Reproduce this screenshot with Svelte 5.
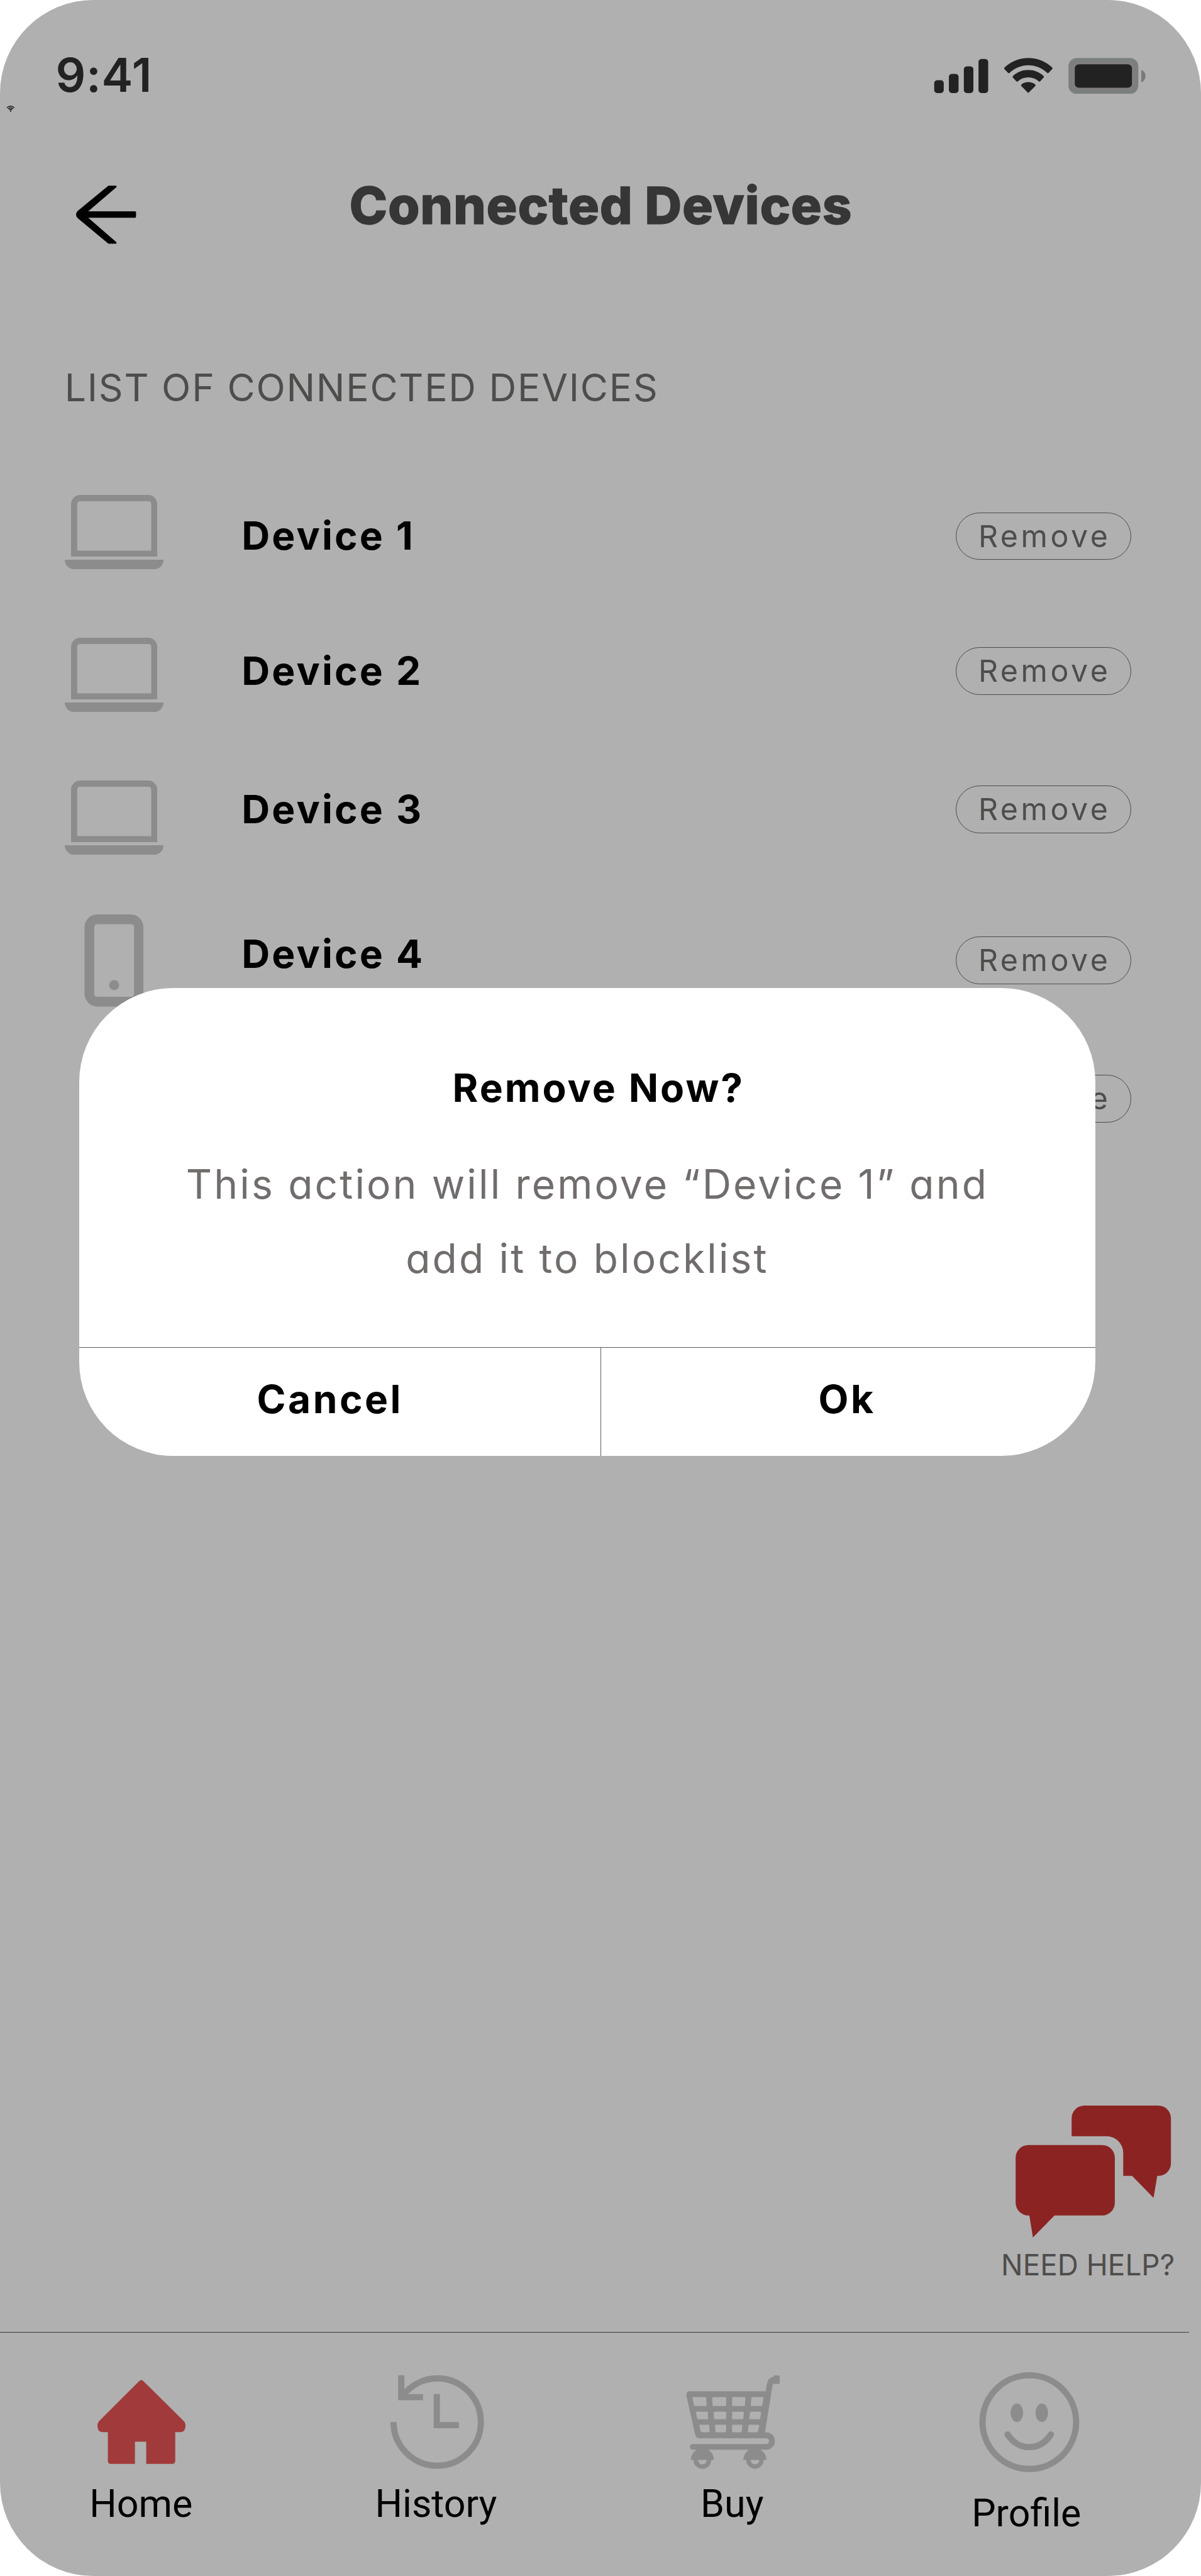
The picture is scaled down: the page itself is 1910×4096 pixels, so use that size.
<script>
  // Vertical offsets are in rem, measured from the top of each row.
  const devices = [
    { name: 'Device 1', icon: 'laptop', height: 3.61, nameTop: 0.545, pillTop: 0.435 },
    { name: 'Device 2', icon: 'laptop', height: 3.61, nameTop: 0.345, pillTop: 0.235 },
    { name: 'Device 3', icon: 'laptop', height: 3.385, nameTop: 0.245, pillTop: 0.135 },
    { name: 'Device 4', icon: 'phone', height: 3.665, nameTop: 0.515, pillTop: 0.57 },
    { name: 'Device 5', icon: 'phone', height: 2.33, nameTop: 0.515, pillTop: 0.4 }
  ];

  // Openings of the cart basket: top-left, top-right, bottom-right, bottom-left x positions per row.
  const basket = [
    { y1: 205, y2: 259, cells: [[84, 190, 194, 98], [234, 342, 342, 238], [386, 488, 484, 386], [532, 625, 617, 528]] },
    { y1: 316, y2: 359, cells: [[111, 202, 205, 122], [246, 342, 342, 249], [386, 476, 472, 386], [521, 607, 601, 517]] },
    { y1: 415, y2: 458, cells: [[137, 212, 216, 148], [256, 342, 342, 260], [386, 465, 461, 386], [509, 592, 584, 506]] }
  ];
  const openings = basket.flatMap(({ y1, y2, cells }) =>
    cells.map(([a, b, c, d]) => `${a + 8},${y1} ${b - 7},${y1} ${c - 8},${y2} ${d + 7},${y2}`)
  );
</script>

<div class="screen">
  <header class="status">
    <span class="time">9:41</span>
    <svg class="indicators" viewBox="60 315 1405 275" preserveAspectRatio="none" fill="#222">
      <rect x="63" y="489" width="63" height="98" rx="22" ry="22" />
      <rect x="160" y="441" width="64" height="146" rx="22" ry="22" />
      <rect x="259" y="384" width="63" height="203" rx="22" ry="22" />
      <rect x="356" y="328" width="64" height="259" rx="22" ry="22" />
      <path d="M528 394C570 347 625 321 686 321C747 321 802 347 844 394Q848 400 844 404L820 433Q815 438 810 433C775 396 730 376 686 376C642 376 597 396 562 433Q556 438 551 433L527 404Q523 399 528 394Z" />
      <path d="M583 458C612 427 647 412 685 412C723 412 758 427 787 458Q791 464 787 469L764 497Q759 502 754 497C735 478 710 468 685 468C660 468 636 478 617 497Q611 502 606 497L583 469Q579 464 583 458Z" />
      <path d="M640 522C652 510 668 504 685 504C702 504 719 510 731 522Q736 528 731 535L689 582Q685 587 681 582L640 535Q635 528 640 522Z" />
      <rect x="951" y="321" width="462" height="273" rx="55" ry="63" fill="#7b7f7f" />
      <rect x="972" y="346" width="420" height="224" rx="35" ry="38" fill="#807e7e" />
      <rect x="993" y="369" width="378" height="177" rx="28" ry="28" />
      <path d="M1433 410Q1461 425 1461 458Q1461 490 1433 507Z" fill="#7a7a7a" />
    </svg>
    <svg class="hotspot" viewBox="0 0 22 16" fill="none" stroke="#111" stroke-width="2.2">
      <path d="M1.500 5.500Q11 -3 20.500 5.500M4.500 8.500Q11 2.500 17.500 8.500M7.500 11.300Q11 8 14.500 11.300" />
      <circle cx="11" cy="14" r="1.700" fill="#111" stroke="none" />
    </svg>
  </header>

  <div class="titlebar">
    <svg class="back" viewBox="190 467 157 151">
      <path d="M275 469h18q4 0 2 4L224 534H342q3 0 3 3v10q0 3-3 3H224L295 612q2 4-2 4H275L197 551Q189 542 197 533Z" />
    </svg>
    <h1>Connected Devices</h1>
  </div>

  <h2>LIST OF CONNECTED DEVICES</h2>

  <ul class="devices">
    {#each devices as d}
      <li style="height:{d.height}rem">
        {#if d.icon === 'laptop'}
          <svg class="device-icon" viewBox="164 1253 250 250" fill="#8c8c8c">
            <path fill-rule="evenodd" d="M180 1409V1276a23 23 0 0 1 23-23H375a23 23 0 0 1 23 23V1409ZM195.500 1394H383V1277q0-8-8-8H203.500q-8 0-8 8Z" />
            <path d="M164 1417H414a24 24 0 0 1-24 24H188a24 24 0 0 1-24-24Z" />
          </svg>
        {:else}
          <svg class="device-icon" viewBox="164 2313.500 250 250" fill="#8c8c8c">
            <path fill-rule="evenodd" d="M246 2313.500H331a32 32 0 0 1 32 32V2514.500a32 32 0 0 1-32 32H246a32 32 0 0 1-32-32V2345.500a32 32 0 0 1 32-32ZM247 2338q-8.500 0-8.500 8.500V2514q0 8 8.500 8H331q8.500 0 8.500-8V2346.500q0-8.500-8.500-8.500Z" />
            <circle cx="289" cy="2492.500" r="12.700" />
          </svg>
        {/if}
        <span class="name" style="margin-top:{d.nameTop}rem">{d.name}</span>
        <button class="remove" style="margin-top:{d.pillTop}rem">Remove</button>
      </li>
    {/each}
  </ul>

  <div class="help">
    <svg viewBox="2540 5329 430 334" fill="#8c2323">
      <path d="M2602.600 5429H2789.700a32 32 0 0 1 32 32V5575a32 32 0 0 1-32 32H2669L2614.300 5663L2605.300 5607H2602.600a32 32 0 0 1-32-32V5461a32 32 0 0 1 32-32Z" />
      <path d="M2712.300 5406.700V5361a32 32 0 0 1 32-32H2931.700a32 32 0 0 1 32 32V5475a32 32 0 0 1-32 32H2929L2919.700 5562.500L2865.300 5507H2842.900V5448.600a42 42 0 0 0-42-41.900Z" />
    </svg>
    <span>NEED HELP?</span>
  </div>

  <div class="rule"></div>

  <nav>
    <a href="#home">
      <svg viewBox="227 6003 260 253" fill="#a13b3b">
        <path d="M351 6026Q357 6020 363 6026L464 6126Q469 6131 469 6138Q469 6154.600 456 6154.600H443V6227Q443 6235 435 6235H369.500V6179H341V6235H280.400Q272.400 6235 272.400 6227V6154.600H259Q246 6154.600 246 6138Q246 6131 251 6126Z" />
      </svg>
      <span>Home</span>
    </a>
    <a href="#history">
      <svg viewBox="976 6003 260 253" fill="none" stroke="#8c8c8c" stroke-width="15.700">
        <path d="M996.500 6129A110.500 110.500 0 1 0 1107 6018.500A110.500 110.500 0 0 0 1020 6062" />
        <path d="M1016 6010.600V6066H1071M1106 6058V6137H1162" />
      </svg>
      <span class="shift">History</span>
    </a>
    <a href="#buy">
      <svg viewBox="3 9 780 759" fill="#8c8c8c">
        <path fill-rule="evenodd" d="M62 154H642L650 100Q660 48 704 43V33H738Q748 33 748 43V89Q748 99 738 99H704V92Q696 95 693 110L636 465H645A66.500 66.500 0 0 1 645 598H602Q646 625 648 675H626A66.500 66.500 0 0 1 493 675H471Q474 625 516 598H205Q247 625 249 675H228A67 67 0 0 1 93 675H72Q75 625 116 598H88A22 22 0 0 1 88 554H645A22 22 0 0 0 645 510H135Q112 508 107 485L39 187Q36 156 62 154ZM127 675A33.500 33.500 0 0 0 194 675ZM526 675A33.500 33.500 0 0 0 593 675Z" />
        {#each openings as points}
          <polygon {points} fill="#b0b0b0" stroke="#b0b0b0" stroke-width="14" stroke-linejoin="round" />
        {/each}
      </svg>
      <span class="shift">Buy</span>
    </a>
    <a href="#profile">
      <svg viewBox="2475 6003 260 253" fill="none" stroke="#8c8c8c" stroke-width="15.800">
        <circle cx="2605.500" cy="6129.300" r="118.500" />
        <ellipse cx="2574" cy="6105.500" rx="15.800" ry="23.500" fill="#8c8c8c" stroke="none" />
        <ellipse cx="2637" cy="6105.500" rx="15.800" ry="23.500" fill="#8c8c8c" stroke="none" />
        <path d="M2550.500 6160.500Q2572 6192.500 2605.500 6192.500T2660 6160.500" stroke-linecap="round" />
      </svg>
      <span class="low">Profile</span>
    </a>
  </nav>

  <div class="modal" role="dialog" aria-modal="true">
    <h3>Remove Now?</h3>
    <p>This action will remove “Device 1” and<br />add it to blocklist</p>
    <div class="actions">
      <button class="cancel">Cancel</button>
      <button class="ok">Ok</button>
    </div>
  </div>
</div>

<style>
  /* The screen is 30.4rem wide; every size below scales from the root font size. */
  :global(html) { font-size: 62.829px; }
  :global(body) { margin: 0; background: #fff; }

  .screen {
    position: relative;
    display: flex;
    flex-direction: column;
    box-sizing: border-box;
    width: 30.4rem;
    height: 4096px;
    overflow: hidden;
    border-radius: 2.36rem;
    background: #b0b0b0;
    font-family: Inter, "Liberation Sans", sans-serif;
    color: #000;
  }
  svg { display: block; flex: none; }
  h1, h2, h3, p, ul { margin: 0; padding: 0; line-height: 1; white-space: nowrap; }
  button { border: 0; background: none; font-family: inherit; color: inherit; padding: 0; margin: 0; }

  .status {
    display: flex;
    justify-content: space-between;
    align-items: flex-start;
    height: 4.567rem;
    padding: 1.3rem 1.389rem 0 1.41rem;
    box-sizing: border-box;
  }
  .time { font-size: 1.19rem; font-weight: 600; line-height: 1; letter-spacing: 0.011rem; color: #222; }
  .indicators { width: 5.376rem; height: 0.917rem; margin-top: 0.155rem; }
  .hotspot { position: absolute; left: 0.165rem; top: 2.68rem; width: 0.22rem; height: 0.16rem; }

  .titlebar { display: flex; align-items: flex-start; height: 4.763rem; padding-left: 1.9rem; }
  .back { width: 1.57rem; height: 1.51rem; margin-top: 0.11rem; }
  h1 {
    margin: -0.01rem 0 0 5.37rem;
    font-size: 1.3rem;
    font-weight: 800;
    letter-spacing: 0.0125rem;
    -webkit-text-stroke: 0.02rem #363636;
    color: #363636;
  }

  h2 {
    height: 3.2rem;
    padding-left: 1.636rem;
    font-size: 0.963rem;
    font-weight: 400;
    letter-spacing: 0.0285rem;
    color: #4e4d4b;
  }

  .devices { list-style: none; }
  .devices li { display: flex; align-items: flex-start; padding: 0 1.76rem 0 1.64rem; }
  .device-icon { width: 2.5rem; height: 2.5rem; }
  .name {
    flex: 1;
    margin-left: 1.975rem;
    font-size: 0.99rem;
    font-weight: 700;
    line-height: 1;
    letter-spacing: 0.051rem;
  }
  .remove {
    box-sizing: border-box;
    width: 4.44rem;
    height: 1.205rem;
    padding-left: 0.04rem;
    border: 1px solid #4c4c4c;
    border-radius: 0.603rem;
    font-size: 0.77rem;
    line-height: 1.17rem;
    letter-spacing: 0.072rem;
    color: #4e4d4b;
  }

  .help {
    display: flex;
    flex-direction: column;
    align-self: flex-end;
    width: 4.3rem;
    margin: auto 0.7rem 1.32rem 0;
  }
  .help svg { width: 4.3rem; height: 3.34rem; }
  .help span {
    margin: 0.33rem 0 0 -0.06rem;
    font-size: 0.73rem;
    line-height: 1;
    white-space: nowrap;
    color: #4e4d4b;
  }

  .rule { width: 30.1rem; height: 1px; flex: none; background: #383838; }

  nav {
    display: grid;
    grid-template-columns: repeat(4, 7.493rem);
    flex: none;
    height: 6.165rem;
    margin-left: -0.176rem;
    padding-top: 1.01rem;
    box-sizing: border-box;
  }
  nav a {
    display: flex;
    flex-direction: column;
    align-items: center;
    color: #000;
    text-decoration: none;
  }
  nav svg { width: 2.6rem; height: 2.53rem; }
  nav span { margin-top: 0.31rem; font: 0.97rem/1 Roboto, sans-serif; }
  nav .shift { margin-right: 0.05rem; }
  nav .low { margin: 0.55rem 0.14rem 0 0; }

  .modal {
    position: absolute;
    left: 2rem;
    top: 25rem;
    display: flex;
    flex-direction: column;
    box-sizing: border-box;
    width: 25.73rem;
    height: 11.84rem;
    padding-top: 2.04rem;
    overflow: hidden;
    border-radius: 2.38rem;
    background: #fff;
    text-align: center;
  }
  h3 { padding-left: 0.57rem; font-size: 0.99rem; font-weight: 700; letter-spacing: 0.0485rem; }
  .modal p {
    margin-top: 1rem;
    font-size: 1.02rem;
    line-height: 1.88rem;
    letter-spacing: 0.05rem;
    font-feature-settings: "cv11";
    color: #716d6c;
  }
  .actions { display: flex; margin-top: auto; height: 2.73rem; border-top: 1px solid #5c5c5c; }
  .actions button {
    display: flex;
    justify-content: center;
    align-items: flex-start;
    box-sizing: border-box;
    padding-top: 0.81rem;
    font-size: 0.99rem;
    font-weight: 700;
    line-height: 1;
    letter-spacing: 0.056rem;
  }
  .actions .cancel { width: 13.21rem; padding-right: 0.49rem; border-right: 1px solid #5c5c5c; }
  .actions .ok { flex: 1; padding-right: 0.06rem; }
</style>
